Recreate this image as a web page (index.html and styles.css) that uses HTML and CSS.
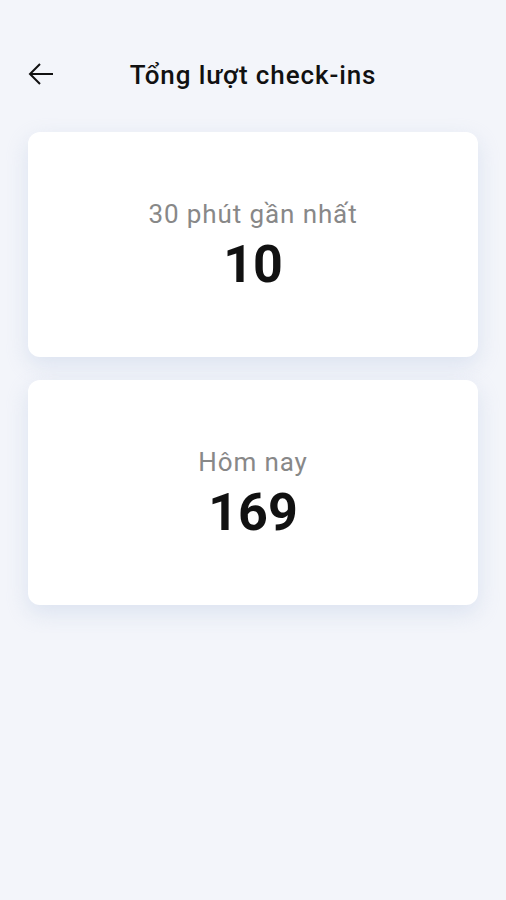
FILE: index.html
```html
<!DOCTYPE html>
<html lang="vi">
  <head>
    <meta charset="UTF-8" />
    <meta name="viewport" content="width=device-width, initial-scale=1.0" />
    <title>Tổng lượt check-ins</title>
    <link rel="stylesheet" href="styles.css">
  </head>
  <body>
    <!-- Header -->
    <header class="top-bar">
      <button class="back-btn" aria-label="Quay lại">
        <svg width="26" height="24" viewBox="0 0 26 24" fill="none" stroke="#111" stroke-width="2" stroke-linecap="square">
          <path d="M24 12H3" />
          <path d="M12 2L2 12l10 10" stroke-linecap="butt" />
        </svg>
      </button>
      <h1 class="title">Tổng lượt check-ins</h1>
    </header>

    <!-- Stats -->
    <main class="stats">
      <div class="stat-card">
        <div class="stat-label">30 phút gần nhất</div>
        <div class="stat-value">10</div>
      </div>
      <div class="stat-card">
        <div class="stat-label">Hôm nay</div>
        <div class="stat-value">169</div>
      </div>
    </main>
  </body>
</html>
```

FILE: styles.css
```css
body {
  margin: 0;
  background-color: #f3f5fa;
  font-family: Roboto, "Noto Sans", Arial, sans-serif;
  color: #111;
}
.top-bar {
  display: grid;
  grid-template-columns: 52px 1fr 52px;
  align-items: center;
  height: 60px;
  margin-top: 44px;
  padding: 0 28px;
}
.back-btn {
  display: flex;
  align-items: center;
  padding: 0;
  border: none;
  background: none;
  cursor: pointer;
}
.title {
  margin: 0;
  padding-top: 2px;
  text-align: center;
  font-size: 26px;
  font-weight: 500;
  letter-spacing: 0.9px;
  white-space: nowrap;
  color: #111;
}
.stats {
  display: flex;
  flex-direction: column;
  gap: 23px;
  padding: 28px 28px;
}
.stat-card {
  display: flex;
  flex-direction: column;
  align-items: center;
  justify-content: center;
  height: 220px;
  padding-top: 5px;
  background-color: #fff;
  border-radius: 12px;
  box-shadow: 0 8px 22px rgba(190, 203, 228, 0.45);
}
.stat-label {
  font-size: 26px;
  line-height: 30px;
  letter-spacing: 0.9px;
  color: #888;
}
.stat-value {
  margin-top: 6px;
  font-size: 52px;
  font-weight: 700;
  line-height: 60px;
  color: #111;
}
```
